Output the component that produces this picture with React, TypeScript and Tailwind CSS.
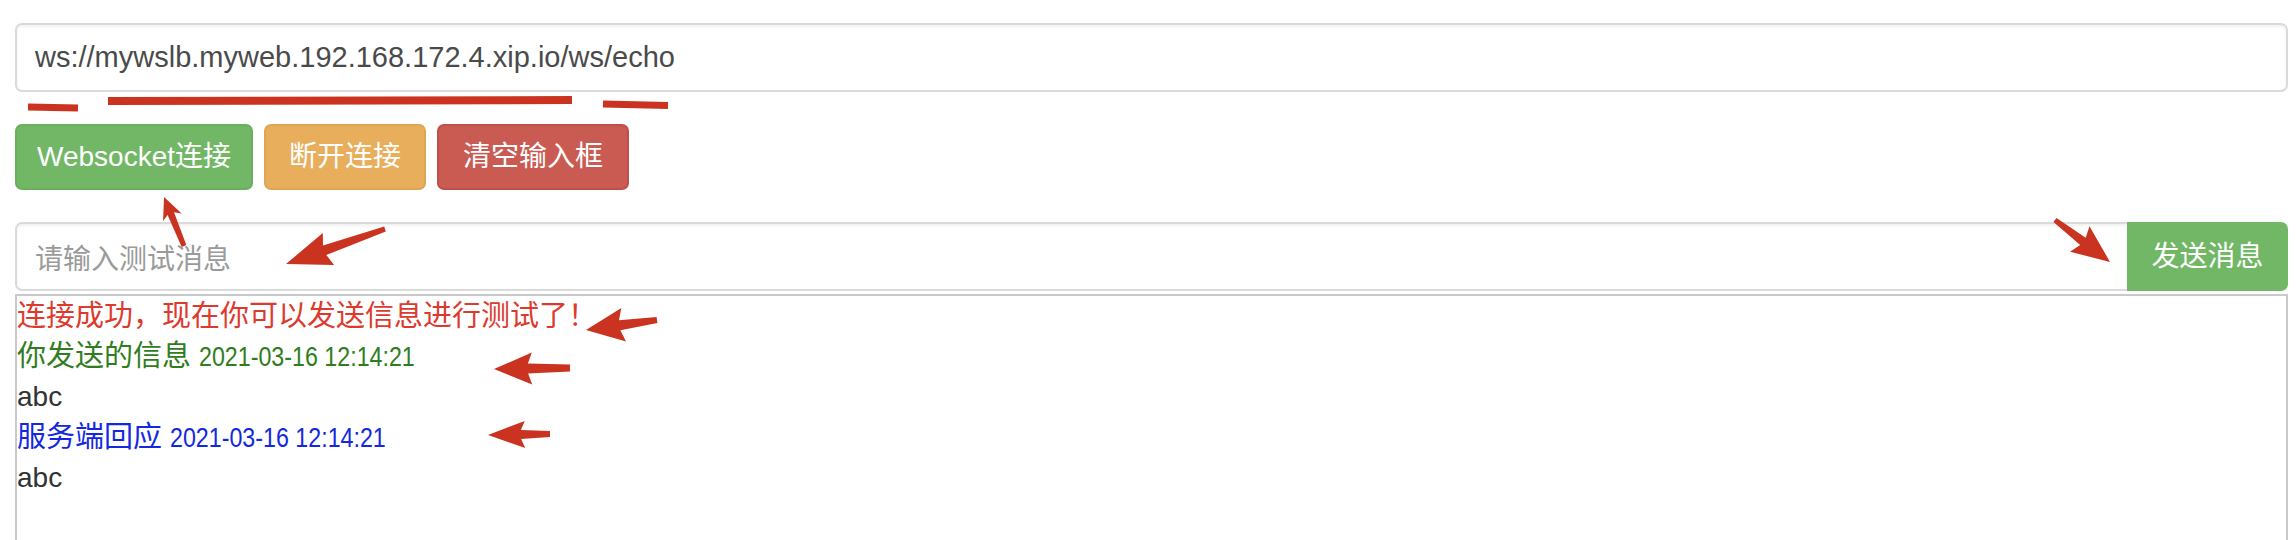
import React from "react";

type Pt = [number, number];

function arrowPoints(tail: Pt, tip: Pt, headLen: number, headW: number, w0: number, w1: number): string {
  const dx = tip[0] - tail[0];
  const dy = tip[1] - tail[1];
  const len = Math.hypot(dx, dy);
  const ux = dx / len;
  const uy = dy / len;
  const nx = -uy;
  const ny = ux;
  const bx = tip[0] - ux * headLen;
  const by = tip[1] - uy * headLen;
  const pts: Pt[] = [
    [tail[0] + nx * (w0 / 2), tail[1] + ny * (w0 / 2)],
    [bx + ux * 4 + nx * (w1 / 2), by + uy * 4 + ny * (w1 / 2)],
    [bx + nx * (headW / 2), by + ny * (headW / 2)],
    [tip[0], tip[1]],
    [bx - nx * (headW / 2), by - ny * (headW / 2)],
    [bx + ux * 4 - nx * (w1 / 2), by + uy * 4 - ny * (w1 / 2)],
    [tail[0] - nx * (w0 / 2), tail[1] - ny * (w0 / 2)],
  ];
  return pts.map((p) => `${p[0].toFixed(1)},${p[1].toFixed(1)}`).join(" ");
}

const arrows: { tail: Pt; tip: Pt; hl: number; hw: number; w0: number; w1: number }[] = [
  { tail: [184, 246], tip: [164, 197], hl: 22, hw: 20, w0: 5, w1: 7 },
  { tail: [385, 229], tip: [286, 264], hl: 45, hw: 34, w0: 5, w1: 10 },
  { tail: [2055, 220], tip: [2110, 262], hl: 38, hw: 32, w0: 5, w1: 9 },
  { tail: [657, 320], tip: [586, 330], hl: 38, hw: 34, w0: 6, w1: 10 },
  { tail: [570, 368], tip: [494, 369], hl: 38, hw: 32, w0: 7, w1: 10 },
  { tail: [550, 434], tip: [488, 435], hl: 37, hw: 27, w0: 6, w1: 9 },
];

export default function App() {
  return (
    <div
      className="relative w-[2296px] h-[540px] overflow-hidden bg-white pl-[15px] pr-[8px] pt-[23px]"
      style={{ fontFamily: '"Liberation Sans", "Noto Sans CJK SC", sans-serif' }}
    >
      <input
        readOnly
        value="ws://mywslb.myweb.192.168.172.4.xip.io/ws/echo"
        className="block w-full h-[69px] border-2 border-[#dadada] rounded-[7px] px-[18px] text-[29px] text-[#4a4a4a] bg-white outline-none shadow-[inset_0_2px_3px_rgba(0,0,0,0.06)]"
        style={{ fontFamily: '"Liberation Sans", sans-serif' }}
      />

      <div className="mt-[32px] flex gap-[11px]">
        <button className="h-[66px] px-[20px] rounded-[7px] border-2 border-[#6aae5e] bg-[#72b766] text-white text-[28px]">
          Websocket连接
        </button>
        <button className="h-[66px] px-[23px] rounded-[7px] border-2 border-[#dea552] bg-[#e8ae5c] text-white text-[28px]">
          断开连接
        </button>
        <button className="h-[66px] px-[24px] rounded-[7px] border-2 border-[#bf4f48] bg-[#ca5b53] text-white text-[28px]">
          清空输入框
        </button>
      </div>

      <div className="mt-[32px] flex h-[69px]">
        <input
          placeholder="请输入测试消息"
          className="flex-1 min-w-0 h-full border-2 border-r-0 border-[#dadada] rounded-l-[7px] px-[18px] text-[28px] text-[#555] placeholder:text-[#9a9a9a] outline-none bg-white shadow-[inset_0_2px_3px_rgba(0,0,0,0.06)]"
          style={{ fontFamily: '"Noto Sans CJK SC", sans-serif' }}
        />
        <button className="w-[161px] h-full rounded-r-[7px] bg-[#72b766] text-white text-[28px]">
          发送消息
        </button>
      </div>

      <div
        className="mt-[3px] h-[400px] border-2 border-[#c9c9c9] text-[29px] leading-[40px]"
        style={{ fontFamily: '"Liberation Sans", "Noto Sans CJK SC", sans-serif' }}
      >
        <div className="text-[#dd3a2e]">连接成功，现在你可以发送信息进行测试了！</div>
        <div className="text-[#2f7d20] whitespace-nowrap">
          你发送的信息{" "}
          <span className="inline-block origin-left scale-x-[0.83] text-[28px]">2021-03-16 12:14:21</span>
        </div>
        <div className="text-[#333] text-[28px]">abc</div>
        <div className="text-[#1428e0] whitespace-nowrap">
          服务端回应{" "}
          <span className="inline-block origin-left scale-x-[0.83] text-[28px]">2021-03-16 12:14:21</span>
        </div>
        <div className="text-[#333] text-[28px]">abc</div>
      </div>

      <svg
        className="absolute left-0 top-0 pointer-events-none"
        width={2296}
        height={540}
        viewBox="0 0 2296 540"
      >
        <g fill="#c9331f" stroke="#c9331f" strokeLinecap="butt">
          <line x1={28} y1={107} x2={78} y2={108} strokeWidth={7} />
          <line x1={108} y1={101} x2={572} y2={100} strokeWidth={8} />
          <line x1={603} y1={104} x2={668} y2={105.5} strokeWidth={7} />
        </g>
        <g fill="#c9331f">
          {arrows.map((a, i) => (
            <polygon key={i} points={arrowPoints(a.tail, a.tip, a.hl, a.hw, a.w0, a.w1)} />
          ))}
        </g>
      </svg>
    </div>
  );
}
